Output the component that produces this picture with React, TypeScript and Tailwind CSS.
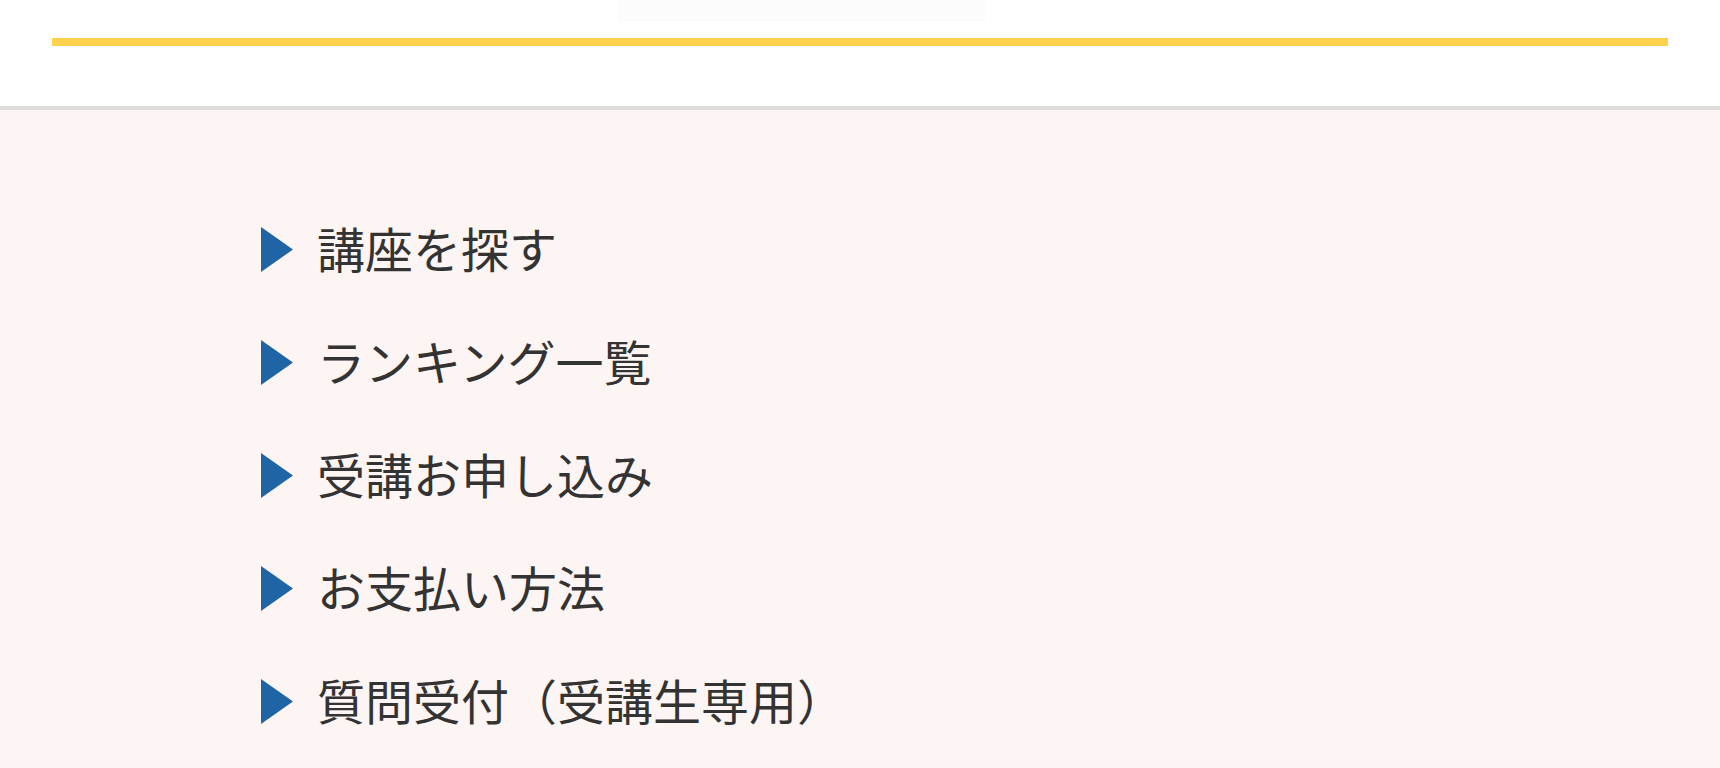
const MENU_ITEMS = [
  '講座を探す',
  'ランキング一覧',
  '受講お申し込み',
  'お支払い方法',
  '質問受付（受講生専用）',
]

function Arrow() {
  return (
    <svg width="32" height="45" viewBox="0 0 32 45" className="shrink-0">
      <polygon points="0,0 32,22.5 0,45" fill="#1f64a4" />
    </svg>
  )
}

export default function App() {
  return (
    <div className="min-h-screen flex flex-col bg-[#fdf5f4] font-['Noto_Sans_CJK_JP','Noto_Sans',sans-serif]">
      {/* Header */}
      <header className="h-[110px] bg-white border-b-4 border-[#dfdddb] flex flex-col">
        <div className="ml-[618px] w-[367px] h-[22px] bg-[#fcfcfc]" />
        <div className="mt-[16px] mx-[52px] h-[8px] bg-[#ffd24d]" />
      </header>

      {/* Menu */}
      <nav className="flex-1 pt-[83px] pl-[261px]">
        <ul className="flex flex-col">
          {MENU_ITEMS.map((label) => (
            <li key={label} className="h-[113px] flex items-center gap-[24px]">
              <Arrow />
              <span className="text-[48px] leading-none pb-[6px] text-[#333333]">{label}</span>
            </li>
          ))}
        </ul>
      </nav>
    </div>
  )
}
